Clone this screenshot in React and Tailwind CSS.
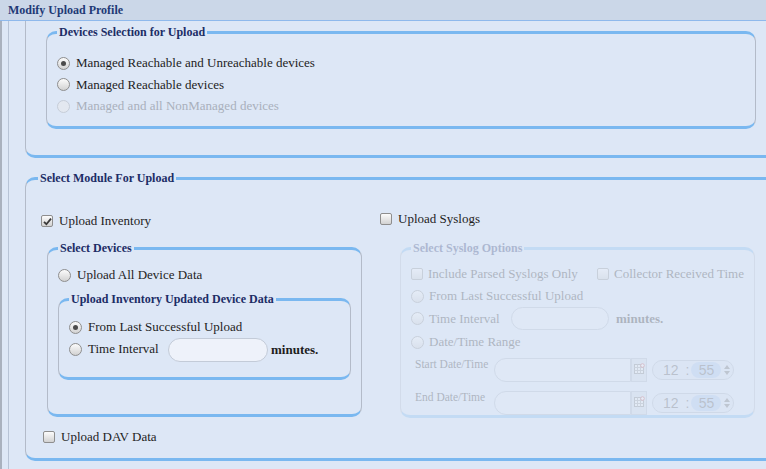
import React from "react";

const Radio = ({ checked, disabled }) => (
  <span
    className={
      disabled
        ? "w-[13px] h-[13px] shrink-0 rounded-full border border-[#c6cdd8] bg-[#e3e8f0]"
        : "w-[13px] h-[13px] shrink-0 rounded-full border border-[#8e8e8e] bg-gradient-to-b from-[#fcfcfc] to-[#d2d2d2] flex items-center justify-center"
    }
  >
    {checked && <span className="w-[5px] h-[5px] rounded-full bg-[#4b4b4b]" />}
  </span>
);

const Checkbox = ({ checked }) => (
  <span className="w-[12px] h-[12px] shrink-0 rounded-[2px] border border-[#8e8e8e] bg-gradient-to-b from-[#fcfcfc] to-[#d2d2d2] flex items-center justify-center">
    {checked && (
      <svg width="9" height="9" viewBox="0 0 9 9">
        <path d="M1 4.8 L3.4 7.2 L8 1.6" fill="none" stroke="#3a3a3a" strokeWidth="1.8" />
      </svg>
    )}
  </span>
);

const Fieldset = ({ legend, className, children }) => (
  <fieldset
    className={`min-w-0 rounded-[10px] border-x border-x-[#b3bbc9] border-t-[3px] border-t-[#7ab8f0] border-b-[3px] border-b-[#7ab8f0] px-[10px] ${className}`}
  >
    <legend className="px-[2px] text-[12px] leading-[14px] font-bold text-[#1c2d66]">
      {legend}
    </legend>
    {children}
  </fieldset>
);

const CalendarIcon = () => (
  <svg width="11" height="11" viewBox="0 0 11 11">
    <rect x="0.5" y="1.5" width="9" height="9" fill="#f4f4f4" stroke="#7a7a7a" />
    <path d="M0.5 4.5 H9.5 M0.5 7.5 H9.5 M3.5 1.5 V10.5 M6.5 1.5 V10.5" stroke="#9a9a9a" />
    <circle cx="8.5" cy="2.5" r="1.8" fill="#fff" stroke="#c03030" strokeWidth="0.8" />
  </svg>
);

const TimeSpinner = () => (
  <div className="ml-[5px] w-[82px] h-[20px] rounded-full border border-[#a9b3c2] bg-[#d9e3f2] flex items-center pl-[10px] font-[family-name:Liberation_Sans,sans-serif] text-[14px] text-[#555]">
    <span>12</span>
    <span className="ml-[7px]">:</span>
    <span className="ml-[2px] w-[30px] h-[16px] rounded-full bg-[#a9c6ee] flex items-center justify-center leading-none">55</span>
    <span className="ml-[3px] flex flex-col gap-[2px]">
      <svg width="6" height="4" viewBox="0 0 6 4"><path d="M0 4 L3 0 L6 4 Z" fill="#666" /></svg>
      <svg width="6" height="4" viewBox="0 0 6 4"><path d="M0 0 L3 4 L6 0 Z" fill="#666" /></svg>
    </span>
  </div>
);

const DateRow = ({ label, className }) => (
  <div className={`flex items-start h-[24px] ${className}`}>
    <span className="ml-[4px] w-[79px] text-[11.5px] leading-[14px] -mt-[1px]">{label}</span>
    <span className="w-[137px] h-[24px] rounded-l-full border border-[#aab4c4] bg-[#e6edf8]" />
    <span className="w-[16px] h-[24px] border border-[#aab4c4] bg-[#cfd8e6] flex justify-end pt-[4px] pr-[1px]">
      <CalendarIcon />
    </span>
    <span className="self-center"><TimeSpinner /></span>
  </div>
);

export default function App() {
  return (
    <div className="w-[766px] h-[469px] overflow-hidden bg-[#dde7f6] flex flex-col font-[family-name:Liberation_Serif,serif] text-[13px] text-[#1d1d1d]">
      {/* Title bar */}
      <div className="h-[21px] shrink-0 bg-[#cbd7e8] border-b border-[#8fb9ec] pl-[8px] flex items-center font-bold text-[12px] text-[#1f3a76]">
        Modify Upload Profile
      </div>

      <div className="flex-1 flex min-h-0">
        <div className="w-[2px] bg-[#a9b1be]" />
        <div className="w-[6px]" />
        <div className="flex-1 min-w-0 border-l border-[#b7c3d6] pl-[16px]">
          {/* Devices selection (scrolled, top cut off) */}
          <div className="w-[780px] border-l border-l-[#b3bbc9] border-b-[3px] border-b-[#7ab8f0] rounded-bl-[10px] pt-[4px] pl-[20px] pb-[26px]">
            <Fieldset legend="Devices Selection for Upload" className="w-[710px]">
              <div className="pt-[13px] pb-[9px] flex flex-col">
                <label className="flex items-center gap-[6px] h-[22px]">
                  <Radio checked />
                  <span>Managed Reachable and Unreachable devices</span>
                </label>
                <label className="flex items-center gap-[6px] h-[21px]">
                  <Radio />
                  <span>Managed Reachable devices</span>
                </label>
                <label className="flex items-center gap-[6px] h-[22px] text-[#a9b0bc]">
                  <Radio disabled />
                  <span>Managed and all NonManaged devices</span>
                </label>
              </div>
            </Fieldset>
          </div>

          {/* Module selection */}
          <fieldset className="mt-[13px] w-[780px] min-w-0 rounded-l-[10px] border-l border-l-[#b3bbc9] border-t-[3px] border-t-[#7ab8f0] border-b-[3px] border-b-[#7ab8f0] px-[12px]">
            <legend className="px-[2px] text-[12px] leading-[14px] font-bold text-[#1c2d66]">
              Select Module For Upload
            </legend>
            <div className="pt-[25px] pb-[10px] pl-[3px] flex">
              {/* Inventory column */}
              <div className="w-[339px] flex flex-col">
                <label className="flex items-center gap-[6px] h-[22px]">
                  <Checkbox checked />
                  <span>Upload Inventory</span>
                </label>
                <Fieldset legend="Select Devices" className="mt-[9px] ml-[6px] w-[315px]">
                  <div className="pt-[9px] pb-[34px]">
                    <label className="flex items-center gap-[6px] h-[22px]">
                      <Radio />
                      <span>Upload All Device Data</span>
                    </label>
                    <Fieldset legend="Upload Inventory Updated Device Data" className="mt-[6px] w-full">
                      <div className="pt-[10px] pb-[15px]">
                        <label className="flex items-center gap-[6px] h-[22px]">
                          <Radio checked />
                          <span>From Last Successful Upload</span>
                        </label>
                        <div className="flex items-center h-[24px]">
                          <label className="flex items-center gap-[6px] w-[99px] -mt-[2px]">
                            <Radio />
                            <span>Time Interval</span>
                          </label>
                          <span className="w-[100px] h-[24px] rounded-full border border-[#c3cbd8] bg-[#eef2fa]" />
                          <span className="ml-[3px] font-bold">minutes.</span>
                        </div>
                      </div>
                    </Fieldset>
                  </div>
                </Fieldset>
                <label className="mt-[9px] ml-[2px] flex items-center gap-[6px] h-[22px]">
                  <Checkbox />
                  <span>Upload DAV Data</span>
                </label>
              </div>

              {/* Syslog column */}
              <div className="flex flex-col">
                <label className="flex items-center gap-[6px] h-[18px]">
                  <Checkbox />
                  <span>Upload Syslogs</span>
                </label>
                <Fieldset legend="Select Syslog Options" className="mt-[13px] ml-[20px] w-[355px] opacity-25">
                  <div className="pt-[8px] flex flex-col">
                    <div className="flex items-center h-[22px]">
                      <label className="flex items-center gap-[5px] w-[186px]">
                        <Checkbox />
                        <span>Include Parsed Syslogs Only</span>
                      </label>
                      <label className="flex items-center gap-[5px]">
                        <Checkbox />
                        <span>Collector Received Time</span>
                      </label>
                    </div>
                    <label className="flex items-center gap-[5px] h-[22px]">
                      <Radio />
                      <span>From Last Successful Upload</span>
                    </label>
                    <div className="flex items-center h-[23px]">
                      <label className="flex items-center gap-[5px] w-[100px]">
                        <Radio />
                        <span>Time Interval</span>
                      </label>
                      <span className="w-[98px] h-[23px] rounded-full border border-[#aab4c4] bg-[#e6edf8]" />
                      <span className="ml-[7px] font-bold">minutes.</span>
                    </div>
                    <label className="flex items-center gap-[5px] h-[24px]">
                      <Radio />
                      <span>Date/Time Range</span>
                    </label>
                    <DateRow label="Start Date/Time" className="mt-[4px]" />
                    <DateRow label="End Date/Time" className="mt-[9px]" />
                  </div>
                </Fieldset>
              </div>
            </div>
          </fieldset>
        </div>
      </div>
    </div>
  );
}
